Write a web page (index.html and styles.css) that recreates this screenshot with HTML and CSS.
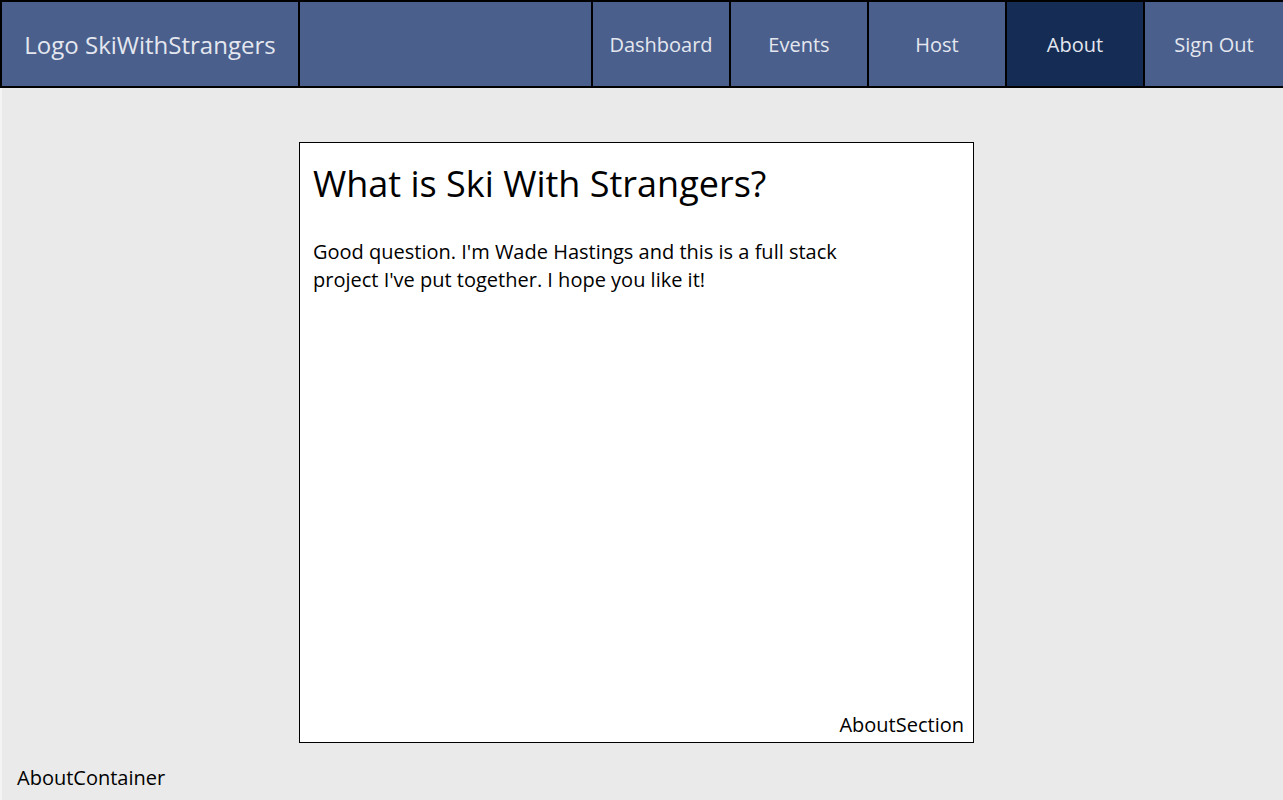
FILE: index.html
```html
<!DOCTYPE html>
<html>
<head>
<meta charset="utf-8">
<link rel="stylesheet" href="styles.css">
</head>
<body>
<header class="nav">
  <div class="logo">Logo SkiWithStrangers</div>
  <div class="spacer"></div>
  <a class="link">Dashboard</a>
  <a class="link">Events</a>
  <a class="link">Host</a>
  <a class="link active">About</a>
  <a class="link last">Sign Out</a>
</header>
<main class="about-container">
  <section class="about-section">
    <h1 class="title">What is Ski With Strangers?</h1>
    <p class="text">Good question. I'm Wade Hastings and this is a full stack project I've put together. I hope you like it!</p>
    <div class="section-label">AboutSection</div>
  </section>
  <div class="container-label">AboutContainer</div>
</main>
</body>
</html>
```

FILE: styles.css
```css
* { box-sizing: border-box; }
html, body { margin: 0; padding: 0; }
body {
  font-family: "Open Sans", "Noto Sans", sans-serif;
  background: #eaeaea;
  width: 1283px;
  height: 800px;
  overflow: hidden;
}
.nav {
  display: flex;
  height: 88px;
  background: #000;
  padding: 2px 0 2px 2px;
  gap: 2px;
}
.logo, .spacer, .link {
  background: #4a5f8c;
  color: #e4e7ef;
  display: flex;
  align-items: center;
  justify-content: center;
}
.logo {
  width: 296px;
  font-size: 24px;
}
.spacer { width: 291px; }
.link {
  width: 136px;
  font-size: 20px;
}
.link.last { flex: 1; }
.active { background: #152d54; }
.about-container {
  height: 712px;
  padding: 54px 0 0 299px;
  display: flex;
  flex-direction: column;
  border-left: 2px solid #f4f4f4;
}
.about-section {
  margin-left: -2px;
  width: 675px;
  height: 601px;
  background: #fff;
  border: 1px solid #000;
  padding: 16px 9px 4px 13px;
  display: flex;
  flex-direction: column;
}
.title {
  margin: 0;
  font-weight: 400;
  font-size: 36px;
  line-height: 50px;
  color: #000;
}
.text {
  margin: 29px 0 0;
  max-width: 550px;
  font-size: 20px;
  line-height: 28px;
  color: #000;
}
.section-label {
  margin-top: auto;
  align-self: flex-end;
  font-size: 20px;
  line-height: 26px;
}
.container-label {
  margin: 22px 0 0 -284px;
  font-size: 20px;
  line-height: 26px;
}
```
